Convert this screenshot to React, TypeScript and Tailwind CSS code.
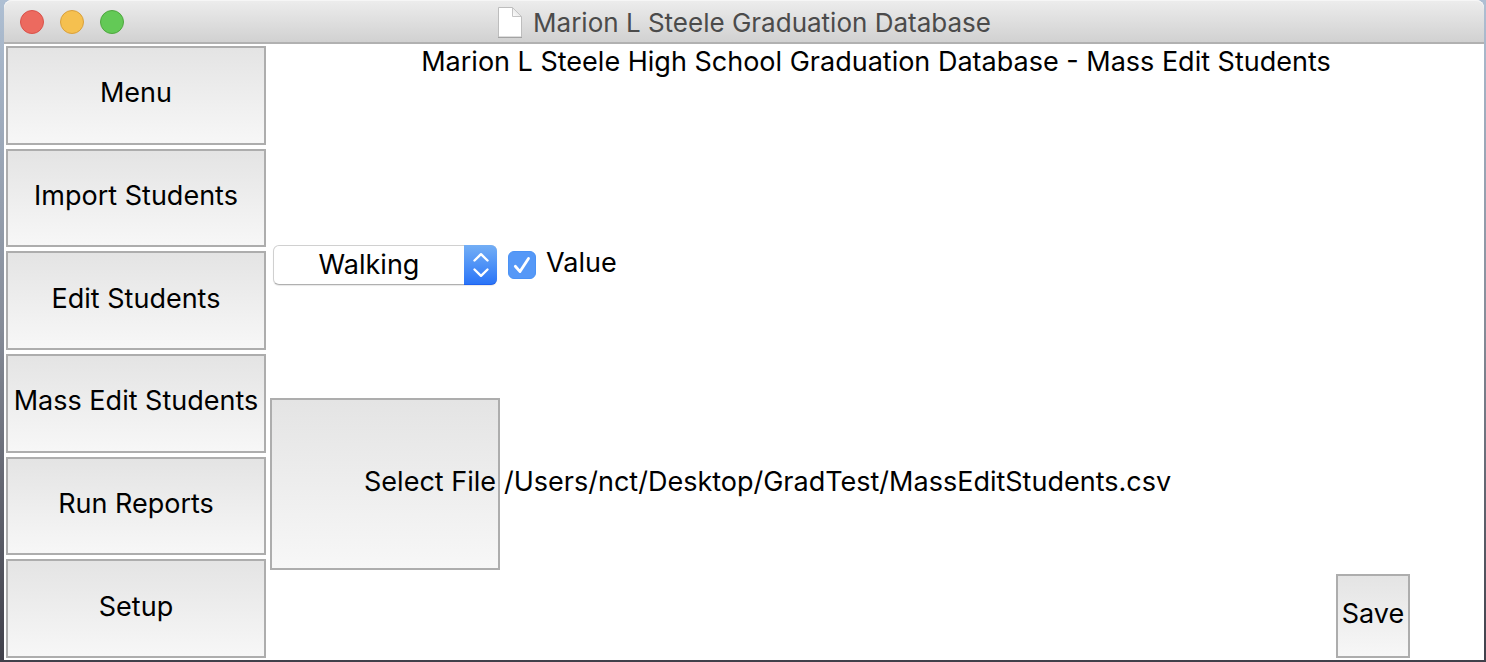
import { useState } from "react";
import type { ReactNode } from "react";

const sections = ["Menu", "Import Students", "Edit Students", "Mass Edit Students", "Run Reports", "Setup"];

function PanelButton({ children, className }: { children: ReactNode; className: string }) {
  return (
    <button
      type="button"
      className={`flex items-center whitespace-nowrap border-2 border-[#adadad] bg-linear-to-b from-[#e4e4e4] to-[#f7f7f7] pb-1 ${className}`}
    >
      {children}
    </button>
  );
}

function TitleBar() {
  return (
    <header className="grid h-11 shrink-0 grid-cols-[1fr_auto_1fr] items-center rounded-t-lg border-b-2 border-[#b1b1b1] bg-linear-to-b from-[#ededed] to-[#d1d1d1] px-4 pt-0.5 shadow-[inset_0_1px_0_#f6f6f6]">
      <div className="flex gap-4">
        <button type="button" aria-label="Close" className="size-6 rounded-full border border-[#d9524a] bg-[#ec6a5f]" />
        <button type="button" aria-label="Minimize" className="size-6 rounded-full border border-[#d9a03c] bg-[#f5c04f]" />
        <button type="button" aria-label="Zoom" className="size-6 rounded-full border border-[#4fa73f] bg-[#63c956]" />
      </div>
      <div className="flex items-center gap-2.5 text-[#4b4b4b]">
        <svg width="26" height="32" viewBox="0 0 26 32" aria-hidden="true">
          <defs>
            <linearGradient id="fold" x1="0" y1="1" x2="1" y2="0">
              <stop offset="0" stopColor="#ffffff" />
              <stop offset="1" stopColor="#d4d4d4" />
            </linearGradient>
          </defs>
          <path d="M1.5 1.5H15.5L24.5 10.5V31H1.5Z" fill="#fff" stroke="#bdbdbd" />
          <path d="M15.5 1.5V10.5H24.5Z" fill="url(#fold)" stroke="#c4c4c4" strokeLinejoin="round" />
          <path d="M1 31.5H25" stroke="#a3a3a3" />
        </svg>
        <span className="pt-0.5 text-[26px]">Marion L Steele Graduation Database</span>
      </div>
    </header>
  );
}

function FieldPicker() {
  return (
    <div className="relative">
      <select
        aria-label="Field"
        defaultValue="Walking"
        className="block h-10 w-56 appearance-none rounded-md border border-[#d0d0d0] border-b-[#b0b0b0] bg-white pr-8 text-center text-[27px] leading-9 shadow-[0_1px_1px_#00000018]"
      >
        <option>Walking</option>
      </select>
      <span className="pointer-events-none absolute inset-y-0 right-0 flex w-[33px] items-center justify-center rounded-r-md border-b border-[#1f62ee] bg-linear-to-b from-[#73aef5] to-[#2a74f7]">
        <svg width="18" height="26" viewBox="0 0 18 26" fill="none" stroke="#fff" strokeWidth="2.4" strokeLinecap="round" strokeLinejoin="round" aria-hidden="true">
          <path d="M2.5 8.5L9 2.2L15.5 8.5" />
          <path d="M2.5 17.5L9 23.8L15.5 17.5" />
        </svg>
      </span>
    </div>
  );
}

function ValueCheckbox() {
  const [checked, setChecked] = useState(true);
  return (
    <label className="flex items-center gap-2.5">
      <span className="relative block size-7">
        <input
          type="checkbox"
          checked={checked}
          onChange={(event) => setChecked(event.target.checked)}
          className="block size-7 appearance-none rounded-md border border-[#c0c0c0] bg-white checked:border-[#4a92f5] checked:bg-[#5598f7]"
        />
        {checked && (
          <svg className="pointer-events-none absolute inset-0" width="28" height="28" viewBox="0 0 28 28" fill="none" stroke="#fff" strokeWidth="2.8" strokeLinecap="round" strokeLinejoin="round" aria-hidden="true">
            <path d="M7.3 15.3L12 20.6L20.5 7.5" />
          </svg>
        )}
      </span>
      <span className="pb-1">Value</span>
    </label>
  );
}

export default function App() {
  return (
    <div className="flex min-h-screen flex-col bg-linear-to-b from-[#aebfd3] via-[#858b97] to-[#40404a] pr-0.5 pb-0.5 pl-1 font-['Inter',sans-serif] text-[27px] leading-8 text-black">
      <div className="flex grow flex-col rounded-t-lg bg-white">
        <TitleBar />
        <div className="flex grow gap-1 p-0.5">
          <nav className="grid w-[260px] shrink-0 auto-rows-fr gap-1">
            {sections.map((section) => (
              <PanelButton key={section} className="justify-center">
                {section}
              </PanelButton>
            ))}
          </nav>
          <main className="grid grow grid-rows-[84fr_260fr_172fr_84fr] gap-1">
            <h1 className="text-center">Marion L Steele High School Graduation Database - Mass Edit Students</h1>
            <div className="flex items-center gap-[11px] pt-0.5 pl-[3px]">
              <FieldPicker />
              <ValueCheckbox />
            </div>
            <div className="flex items-center gap-1">
              <PanelButton className="w-[230px] justify-end self-stretch pr-0.5">Select File</PanelButton>
              <span className="pb-1">/Users/nct/Desktop/GradTest/MassEditStudents.csv</span>
            </div>
            <div className="flex justify-end pr-[72px]">
              <PanelButton className="w-[74px] justify-center">Save</PanelButton>
            </div>
          </main>
        </div>
      </div>
    </div>
  );
}
